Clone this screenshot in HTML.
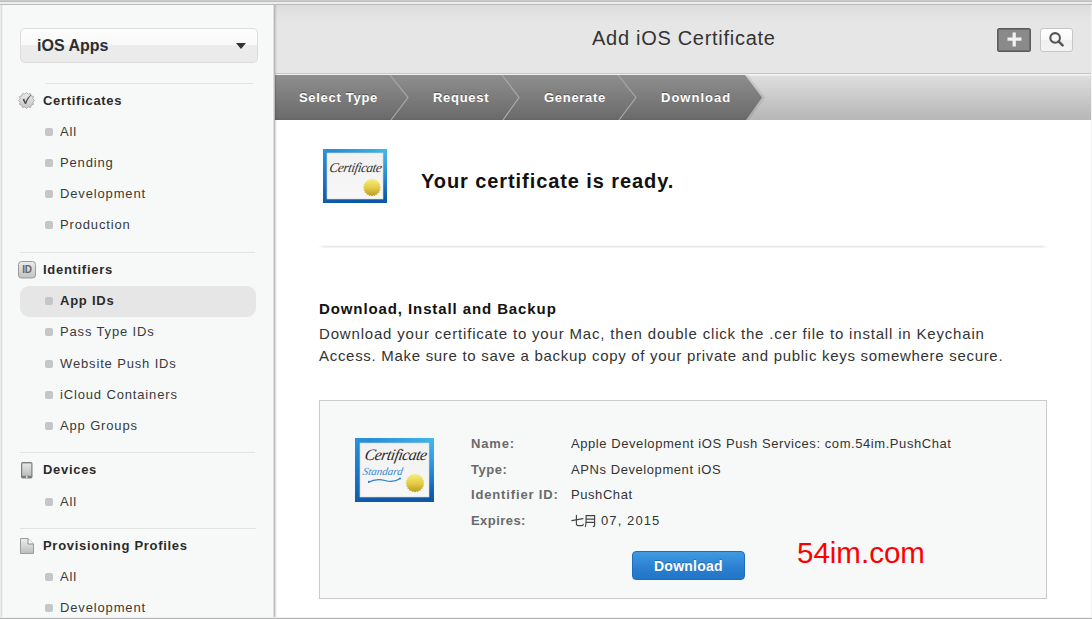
<!DOCTYPE html>
<html><head><meta charset="utf-8">
<style>
*{box-sizing:border-box;margin:0;padding:0}
html,body{width:1092px;height:619px;overflow:hidden;background:#fff}
body{position:relative;font-family:"Liberation Sans",sans-serif;color:#333}
.a{position:absolute;white-space:nowrap;line-height:1}
/* frame */
#topb{position:absolute;left:0;top:0;width:1092px;height:5px;background:linear-gradient(#cbcbcb 0,#cbcbcb 1px,#bebebe 1px,#bebebe 2px,#eeeeee 2px,#ececec 4px,#bcbcbc 4px,#bcbcbc 5px)}
#side{position:absolute;left:0;top:5px;width:274px;height:614px;background:#f7f9f8}
#sideedge{position:absolute;left:0;top:5px;width:3px;height:614px;background:linear-gradient(90deg,#ebebeb 0,#ebebeb 1px,#dcdddc 1px,#dcdddc 2px,#f0f0f0 2px)}
#sideb{position:absolute;left:272px;top:5px;width:5px;height:614px;background:linear-gradient(90deg,#fbfbfb 0,#fbfbfb 1px,#dcdedd 1px,#dcdedd 2px,#bababa 2px,#bababa 3px,rgba(0,0,0,.11) 3px,rgba(0,0,0,.11) 4px,rgba(0,0,0,.04) 4px)}
#botb{position:absolute;left:0;top:617px;width:1092px;height:2px;background:linear-gradient(#eeeeee 0,#eeeeee 1px,#b4b4b4 1px)}
#rightb{position:absolute;left:1091px;top:5px;width:1px;height:612px;background:#f2f2f2}
/* sidebar */
#dd{position:absolute;left:20px;top:28px;width:238px;height:35px;border:1px solid #dcdcdc;border-radius:5px;background:linear-gradient(#fdfdfd 0,#f9f9f9 47%,#ececec 49%,#eaeaea 100%)}
#dd .t{left:16px;top:9px;font-weight:bold;font-size:16px;color:#2e2e2e;letter-spacing:0}
#dd .tri{position:absolute;left:215px;top:14px;width:0;height:0;border-left:5px solid transparent;border-right:5px solid transparent;border-top:6px solid #333}
.hr{position:absolute;height:1px;background:#e2e3e3}
.sh{font-weight:bold;font-size:13px;color:#2b2b2b;letter-spacing:0.7px}
.si{font-size:13px;color:#3a3a3a;letter-spacing:0.85px}
.bul{position:absolute;left:45px;width:8px;height:8px;border-radius:2px;background:#c5c6ca}
#sel{position:absolute;left:20px;top:286px;width:236px;height:31px;border-radius:9px;background:#e6e6e6}
/* header */
#hdr{position:absolute;left:275px;top:5px;width:817px;height:68px;background:linear-gradient(#dcdcdc 0,#e3e3e3 10px,#e6e6e6 20px,#e6e6e6 100%)}
#hline{position:absolute;left:275px;top:73px;width:817px;height:2px;background:linear-gradient(#c6c6c6 0,#c6c6c6 1px,#f2f2f2 1px)}
#title{left:592px;top:28px;font-size:20px;color:#333;letter-spacing:0.71px}
#plus{position:absolute;left:997px;top:28px;width:34px;height:24px;border:1px solid #5c5c5c;border-radius:2px;background:#8a8a8a;box-shadow:inset 0 0 0 1px #6e6e6e}
#srch{position:absolute;left:1040px;top:28px;width:33px;height:24px;border:1px solid #c6c6c6;border-radius:3px;background:linear-gradient(#fefefe 0,#f9f9f9 50%,#f0f0f0 52%,#f3f3f3 100%)}
/* breadcrumb */
#bc{position:absolute;left:275px;top:75px;width:817px;height:45px}
.lb{font-weight:bold;font-size:13px;color:#6a6a6a;letter-spacing:0.85px}
.vl{font-size:13px;color:#333;letter-spacing:0.57px}
#dlb{position:absolute;left:632px;top:551px;width:113px;height:29px;border:1px solid #1d6dbd;border-radius:4px;background:linear-gradient(#409ae2,#2a7fd0 60%,#2274c6)}
.bct{color:#fff;font-weight:bold;font-size:13px;letter-spacing:0.7px;text-shadow:0 -1px 0 rgba(0,0,0,.35)}
</style></head><body>
<div id="topb"></div>
<div id="side"></div>
<div id="sideedge"></div>

<!-- sidebar -->
<div id="dd"><div class="a t">iOS Apps</div><div class="tri"></div></div>
<div class="hr" style="left:46px;top:83px;width:207px"></div>

<svg style="position:absolute;left:18px;top:92px" width="17" height="17" viewBox="0 0 17 17">
  <defs><linearGradient id="bdg" x1="0" y1="0" x2="0" y2="1"><stop offset="0" stop-color="#ececec"/><stop offset="1" stop-color="#c6c6c6"/></linearGradient></defs>
  <polygon points="8.50,0.50 10.21,2.12 12.50,1.57 13.17,3.83 15.43,4.50 14.88,6.79 16.50,8.50 14.88,10.21 15.43,12.50 13.17,13.17 12.50,15.43 10.21,14.88 8.50,16.50 6.79,14.88 4.50,15.43 3.83,13.17 1.57,12.50 2.12,10.21 0.50,8.50 2.12,6.79 1.57,4.50 3.83,3.83 4.50,1.57 6.79,2.12" fill="url(#bdg)" stroke="#a0a0a0" stroke-width="0.8"/>
  <path d="M4.6 7.6 L6.2 6.8 L7.5 9.9 C8.8 6.8 10.5 4.4 12.9 2.7 L13.3 3.1 C11.3 5.1 9.6 8.0 8.1 12.0 L7.0 12.0 Z" fill="#4a4a4a"/>
</svg>
<div class="a sh" style="left:43px;top:94px">Certificates</div>
<div class="bul" style="top:128px"></div><div class="a si" style="left:60px;top:125px">All</div>
<div class="bul" style="top:159px"></div><div class="a si" style="left:60px;top:156px">Pending</div>
<div class="bul" style="top:190px"></div><div class="a si" style="left:60px;top:187px">Development</div>
<div class="bul" style="top:221px"></div><div class="a si" style="left:60px;top:218px">Production</div>

<div class="hr" style="left:20px;top:252px;width:235px"></div>
<svg style="position:absolute;left:18px;top:261px" width="18" height="18" viewBox="0 0 18 18">
  <defs><linearGradient id="idg" x1="0" y1="0" x2="0" y2="1"><stop offset="0" stop-color="#ececec"/><stop offset="1" stop-color="#c2c2c2"/></linearGradient></defs>
  <rect x="0.5" y="0.5" width="17" height="16.5" rx="3" fill="url(#idg)" stroke="#9a9a9a" stroke-width="1"/>
  <text x="9" y="12.3" text-anchor="middle" font-family="Liberation Sans" font-size="10" font-weight="bold" fill="#666" letter-spacing="-0.2">ID</text>
</svg>
<div class="a sh" style="left:43px;top:263px">Identifiers</div>
<div id="sel"></div>
<div class="bul" style="top:297px"></div><div class="a si" style="left:60px;top:294px;font-weight:bold;color:#2b2b2b;letter-spacing:0.75px">App IDs</div>
<div class="bul" style="top:328px"></div><div class="a si" style="left:60px;top:325px">Pass Type IDs</div>
<div class="bul" style="top:360px"></div><div class="a si" style="left:60px;top:357px">Website Push IDs</div>
<div class="bul" style="top:391px"></div><div class="a si" style="left:60px;top:388px">iCloud Containers</div>
<div class="bul" style="top:422px"></div><div class="a si" style="left:60px;top:419px">App Groups</div>

<div class="hr" style="left:20px;top:452px;width:235px"></div>
<svg style="position:absolute;left:21px;top:462px" width="12" height="17" viewBox="0 0 12 17">
  <defs><linearGradient id="dvg" x1="0" y1="0" x2="0" y2="1"><stop offset="0" stop-color="#e6e6e6"/><stop offset="1" stop-color="#bdbdbd"/></linearGradient></defs>
  <rect x="0" y="0" width="11.5" height="16.5" rx="1.8" fill="#7c7c7c"/>
  <rect x="1.2" y="1.4" width="9.1" height="12.4" fill="url(#dvg)"/>
  <circle cx="5.75" cy="15.1" r="0.9" fill="#f4f4f4"/>
</svg>
<div class="a sh" style="left:43px;top:463px">Devices</div>
<div class="bul" style="top:498px"></div><div class="a si" style="left:60px;top:495px">All</div>

<div class="hr" style="left:20px;top:528px;width:236px"></div>
<svg style="position:absolute;left:20px;top:538px" width="14" height="16" viewBox="0 0 14 16">
  <defs><linearGradient id="dcg" x1="0" y1="0" x2="0" y2="1"><stop offset="0" stop-color="#eeeeee"/><stop offset="1" stop-color="#bcbcbc"/></linearGradient></defs>
  <path d="M0.5 0.5 H8 L13.5 6 V15.5 H0.5 Z" fill="url(#dcg)" stroke="#9c9c9c" stroke-width="1"/>
  <path d="M8 0.5 V6 H13.5" fill="#fafafa" stroke="#8a8a8a" stroke-width="1"/>
</svg>
<div class="a sh" style="left:43px;top:539px">Provisioning Profiles</div>
<div class="bul" style="top:573px"></div><div class="a si" style="left:60px;top:570px">All</div>
<div class="bul" style="top:604px"></div><div class="a si" style="left:60px;top:601px">Development</div>

<!-- header -->
<div id="hdr"></div>
<div id="hline"></div>
<div class="a" id="title">Add iOS Certificate</div>
<div id="plus"><svg style="position:absolute;left:8px;top:2px" width="16" height="16" viewBox="0 0 16 16"><rect x="1.5" y="6.5" width="14" height="3.2" fill="#f2f2f2"/><rect x="6.6" y="1.5" width="3.2" height="14" fill="#f2f2f2"/></svg></div>
<div id="srch"><svg style="position:absolute;left:7px;top:2px" width="18" height="18" viewBox="0 0 18 18"><circle cx="7.1" cy="6.9" r="4.8" fill="none" stroke="#555" stroke-width="2.1"/><path d="M10.6 10.4 L14.6 14.4" stroke="#555" stroke-width="2.5" stroke-linecap="round"/></svg></div>

<!-- breadcrumb -->
<svg id="bc" width="817" height="45" viewBox="0 0 817 45">
  <defs>
    <linearGradient id="gd" x1="0" y1="0" x2="0" y2="1"><stop offset="0" stop-color="#8e8e8e"/><stop offset="0.96" stop-color="#6b6b6b"/><stop offset="1" stop-color="#646464"/></linearGradient>
    <linearGradient id="gl" x1="0" y1="0" x2="0" y2="1"><stop offset="0" stop-color="#dedede"/><stop offset="1" stop-color="#b6b6b6"/></linearGradient>
  </defs>
  <rect x="0" y="0" width="817" height="45" fill="url(#gl)"/>
  <rect x="470" y="0" width="347" height="1" fill="#ededed"/>
  <polyline points="471,0 488.5,22.5 472,45" fill="none" stroke="rgba(0,0,0,.07)" stroke-width="3"/>
  <polygon points="0,0 470,0 487,22.5 471,45 0,45" fill="url(#gd)"/>
  <polyline points="115,0 133,22.5 116,45" fill="none" stroke="#a9a9a9" stroke-width="1.2"/>
  <polyline points="227,0 244,22.5 228,45" fill="none" stroke="#a9a9a9" stroke-width="1.2"/>
  <polyline points="343,0 361,22.5 344,45" fill="none" stroke="#a9a9a9" stroke-width="1.2"/>
</svg>
<div class="a bct" style="left:299px;top:91px">Select Type</div>
<div class="a bct" style="left:433px;top:91px">Request</div>
<div class="a bct" style="left:544px;top:91px">Generate</div>
<div class="a bct" style="left:661px;top:91px;letter-spacing:1px">Download</div>

<!-- content -->
<svg style="position:absolute;left:322px;top:148px" width="66" height="56" viewBox="0 0 66 56">
  <defs>
    <linearGradient id="cb1" x1="0" y1="0" x2="0.25" y2="1"><stop offset="0" stop-color="#2a92dc"/><stop offset="0.55" stop-color="#1a74c8"/><stop offset="1" stop-color="#0d58a8"/></linearGradient><linearGradient id="cyan" x1="0.2" y1="0.7" x2="1" y2="0"><stop offset="0.4" stop-color="#4cc6f0" stop-opacity="0"/><stop offset="1" stop-color="#4cc6f0" stop-opacity="0.8"/></linearGradient>
    <linearGradient id="ci1" x1="0" y1="0" x2="0" y2="1"><stop offset="0" stop-color="#f2f2f2"/><stop offset="1" stop-color="#f7f7f7"/></linearGradient>
    <linearGradient id="seal" x1="0" y1="0" x2="0" y2="1"><stop offset="0" stop-color="#f8ee7a"/><stop offset="0.5" stop-color="#e6cf48"/><stop offset="1" stop-color="#b8981e"/></linearGradient>
  </defs>
  <rect x="1" y="1" width="64" height="54" fill="url(#cb1)"/><rect x="1" y="1" width="64" height="54" fill="url(#cyan)"/>
  <rect x="5" y="5" width="56" height="46" fill="url(#ci1)" stroke="#d8d8d8" stroke-width="0.6"/>
  <text x="33" y="24" text-anchor="middle" font-family="Liberation Serif" font-style="italic" font-size="13.5" fill="#333" letter-spacing="-0.5" transform="translate(4 0) skewX(-10)">Certificate</text>
  <polygon transform="translate(50 39.5) scale(9)" points="0.000,-1.000 0.138,-0.869 0.309,-0.951 0.400,-0.784 0.588,-0.809 0.622,-0.622 0.809,-0.588 0.784,-0.400 0.951,-0.309 0.869,-0.138 1.000,0.000 0.869,0.138 0.951,0.309 0.784,0.400 0.809,0.588 0.622,0.622 0.588,0.809 0.400,0.784 0.309,0.951 0.138,0.869 0.000,1.000 -0.138,0.869 -0.309,0.951 -0.400,0.784 -0.588,0.809 -0.622,0.622 -0.809,0.588 -0.784,0.400 -0.951,0.309 -0.869,0.138 -1.000,0.000 -0.869,-0.138 -0.951,-0.309 -0.784,-0.400 -0.809,-0.588 -0.622,-0.622 -0.588,-0.809 -0.400,-0.784 -0.309,-0.951 -0.138,-0.869" fill="url(#seal)"/>
</svg>
<div class="a" style="left:421px;top:170.5px;font-weight:bold;font-size:20px;color:#111;letter-spacing:0.92px">Your certificate is ready.</div>
<div style="position:absolute;left:318px;top:245px;width:730px;height:3px;background:linear-gradient(#f8f8f8 0,#f8f8f8 1px,#eaeaea 1px,#eaeaea 2px,#f2f2f2 2px);-webkit-mask-image:linear-gradient(90deg,transparent 0,#000 6px,#000 724px,transparent 730px)"></div>

<div class="a" style="left:319px;top:301px;font-weight:bold;font-size:15px;color:#111;letter-spacing:0.9px">Download, Install and Backup</div>
<div class="a" style="left:319px;top:326px;font-size:15px;color:#333;letter-spacing:0.82px">Download your certificate to your Mac, then double click the .cer file to install in Keychain</div>
<div class="a" style="left:319px;top:348px;font-size:15px;color:#333;letter-spacing:0.70px">Access. Make sure to save a backup copy of your private and public keys somewhere secure.</div>

<div id="box" style="position:absolute;left:319px;top:400px;width:728px;height:199px;border:1px solid #cbcbcb;background:#f7f9f9"></div>
<svg style="position:absolute;left:354px;top:437px" width="81" height="66" viewBox="0 0 81 66">
  <defs>
    <linearGradient id="cb2" x1="0" y1="0" x2="0.25" y2="1"><stop offset="0" stop-color="#2a92dc"/><stop offset="0.55" stop-color="#1a74c8"/><stop offset="1" stop-color="#0d58a8"/></linearGradient>
  </defs>
  <rect x="1" y="1" width="79" height="64" fill="url(#cb2)"/><rect x="1" y="1" width="79" height="64" fill="url(#cyan)"/>
  <rect x="6" y="6" width="69" height="54" fill="url(#ci1)" stroke="#d8d8d8" stroke-width="0.6"/>
  <text x="41" y="23" text-anchor="middle" font-family="Liberation Serif" font-style="italic" font-size="16" fill="#2a2a2a" letter-spacing="-0.6" transform="translate(4 0) skewX(-10)">Certificate</text>
  <text x="9" y="38" font-family="Liberation Serif" font-style="italic" font-size="11" fill="#3a8ad6" transform="translate(6 0) skewX(-10)">Standard</text>
  <path d="M14 45.5 Q22 41 31 43.5 T46 41.5" fill="none" stroke="#2a7fd0" stroke-width="1.1"/><circle cx="15" cy="44.8" r="1" fill="#2a7fd0"/><circle cx="46" cy="41.5" r="1" fill="#2a7fd0"/>
  <polygon transform="translate(61 46) scale(9.5)" points="0.000,-1.000 0.138,-0.869 0.309,-0.951 0.400,-0.784 0.588,-0.809 0.622,-0.622 0.809,-0.588 0.784,-0.400 0.951,-0.309 0.869,-0.138 1.000,0.000 0.869,0.138 0.951,0.309 0.784,0.400 0.809,0.588 0.622,0.622 0.588,0.809 0.400,0.784 0.309,0.951 0.138,0.869 0.000,1.000 -0.138,0.869 -0.309,0.951 -0.400,0.784 -0.588,0.809 -0.622,0.622 -0.809,0.588 -0.784,0.400 -0.951,0.309 -0.869,0.138 -1.000,0.000 -0.869,-0.138 -0.951,-0.309 -0.784,-0.400 -0.809,-0.588 -0.622,-0.622 -0.588,-0.809 -0.400,-0.784 -0.309,-0.951 -0.138,-0.869" fill="url(#seal)"/>
</svg>
<div class="a lb" style="left:471px;top:437px">Name:</div>
<div class="a lb" style="left:471px;top:463px;letter-spacing:0.55px">Type:</div>
<div class="a lb" style="left:471px;top:488px">Identifier ID:</div>
<div class="a lb" style="left:471px;top:514px;letter-spacing:0.45px">Expires:</div>
<div class="a vl" style="left:571px;top:437px">Apple Development iOS Push Services: com.54im.PushChat</div>
<div class="a vl" style="left:571px;top:463px">APNs Development iOS</div>
<div class="a vl" style="left:571px;top:488px">PushChat</div>
<svg style="position:absolute;left:570px;top:513px" width="28" height="16" viewBox="0 0 28 16" fill="none" stroke="#444" stroke-width="1.15" stroke-linecap="round">
  <path d="M1.8 7.6 L13 5.6"/>
  <path d="M6.4 2.2 V10.8 Q6.4 12.6 8.4 12.6 H12.2 Q13.1 12.6 13.2 11.2"/>
  <path d="M15.4 13.6 Q16.1 11 16.1 7 V2.6 H24.6 V12.4 Q24.6 13.6 23.2 13.4"/>
  <path d="M16.2 6.1 H24.4 M16.2 9.4 H24.4"/>
</svg>
<div class="a vl" style="left:601px;top:514px;letter-spacing:1.1px">07, 2015</div>
<div id="dlb"><div class="a" style="left:21px;top:7px;font-weight:bold;font-size:14px;color:#fff;letter-spacing:0.25px;text-shadow:0 -1px 0 rgba(0,40,100,.3)">Download</div></div>
<div class="a" style="left:797px;top:538px;font-size:29.5px;color:#f00">54im.com</div>

<div id="sideb"></div>
<div id="botb"></div>
<div id="rightb"></div>
</body></html>
